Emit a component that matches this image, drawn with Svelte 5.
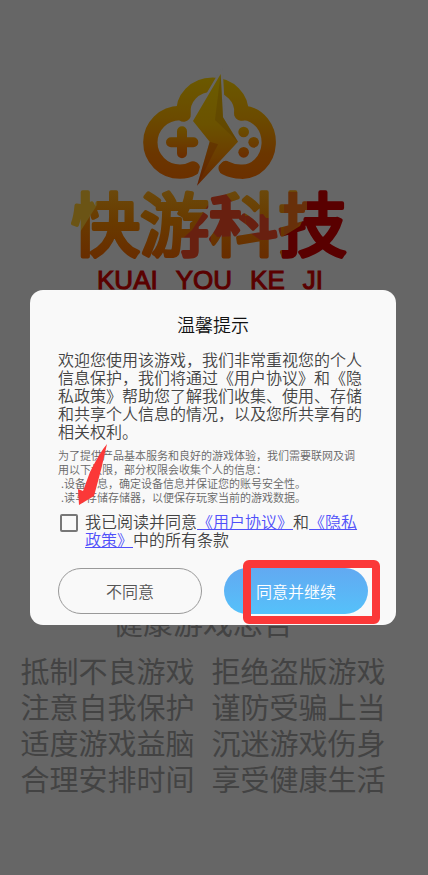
<script lang="ts">
	let agreed = $state(false);

	const advice = [
		['抵制不良游戏', '拒绝盗版游戏'],
		['注意自我保护', '谨防受骗上当'],
		['适度游戏益脑', '沉迷游戏伤身'],
		['合理安排时间', '享受健康生活']
	];

	const permissions = [
		'.设备信息，确定设备信息并保证您的账号安全性。',
		'.读写存储存储器，以便保存玩家当前的游戏数据。'
	];
</script>

<main class="splash">
	<svg class="logo" viewBox="0 0 480 390" aria-hidden="true">
		<defs>
			<linearGradient id="cloud" gradientUnits="userSpaceOnUse" x1="0" y1="30" x2="0" y2="345">
				<stop offset="0" stop-color="#6b5a00" />
				<stop offset="0.4" stop-color="#6b4b00" />
				<stop offset="0.75" stop-color="#6b3600" />
				<stop offset="1" stop-color="#6b3000" />
			</linearGradient>
			<linearGradient id="bolt" gradientUnits="userSpaceOnUse" x1="0" y1="30" x2="0" y2="360">
				<stop offset="0" stop-color="#6b5c00" />
				<stop offset="0.45" stop-color="#6b5200" />
				<stop offset="0.75" stop-color="#6b3c00" />
				<stop offset="1" stop-color="#652400" />
			</linearGradient>
			<linearGradient id="pad" gradientUnits="userSpaceOnUse" x1="0" y1="184" x2="0" y2="280">
				<stop offset="0" stop-color="#6b5000" />
				<stop offset="1" stop-color="#6b2c00" />
			</linearGradient>
		</defs>
		<g fill="none" stroke="url(#cloud)" stroke-width="43" stroke-linecap="round">
			<path d="M158 144H150A89 88 0 0 0 150 320Q172 320 189 310" />
			<path d="M334 144H342A79 88 0 0 1 332 320Q308 320 287 309" />
			<path d="M161 149C155 101 194 59 248 59C299 59 338 100 334 146" />
		</g>
		<path d="M272 27L189 168L239 230L201 362L324 230L279 157Z" fill="url(#bolt)" stroke="#666" stroke-width="14" />
		<path d="M272 27L189 168L239 230L201 362L324 230L279 157Z" fill="url(#bolt)" />
		<path d="M272 27L255 165L324 230L279 157Z" fill="#573800" opacity="0.35" />
		<path d="M239 230L264 238L201 362Z" fill="#571800" opacity="0.3" />
		<path d="M156 199V265M123 232H190" fill="none" stroke="url(#pad)" stroke-width="30" stroke-linecap="round" />
		<g fill="url(#pad)">
			<circle cx="341" cy="201" r="16" />
			<circle cx="371" cy="232" r="16" />
			<circle cx="341" cy="262" r="16" />
		</g>
	</svg>

	<svg class="wordmark" viewBox="0 0 300 100" role="img" aria-label="快游科技">
		<defs>
			<linearGradient id="orange" x1="0" y1="0" x2="0" y2="1">
				<stop offset="0.1" stop-color="#6b490b" />
				<stop offset="0.4" stop-color="#693b00" />
				<stop offset="0.8" stop-color="#682c00" />
			</linearGradient>
			<pattern id="facets" patternUnits="userSpaceOnUse" width="300" height="100">
				<rect width="300" height="100" fill="url(#orange)" />
				<path d="M0 0H38L37 25L20 52H0Z" fill="#6b5415" />
				<path d="M150 22L132 50L121 60V95H151V22Z" fill="#682010" />
				<path d="M151 14H166L174 24L185 30V52L180 56L157 57L151 50Z" fill="#682010" />
				<path d="M185 36L203 34L206 38H221V60H200L186 50Z" fill="#682010" />
				<path d="M224 12H247V30L238 46L224 56Z" fill="#68300a" />
				<path d="M247 0H300V100H222V57L240 46L247 30Z" fill="#590000" />
			</pattern>
		</defs>
		<text x="11" y="71">快游科技</text>
	</svg>

	<p class="pinyin"><span>KUAI</span><span>YOU</span><span>KE</span><span>JI</span></p>

	<section class="advice">
		<h2>健康游戏忠告</h2>
		{#each advice as [left, right]}
			<p><span>{left}</span><span>{right}</span></p>
		{/each}
	</section>
</main>

<div class="overlay">
	<div class="dialog" role="dialog" aria-modal="true" aria-labelledby="dialog-title">
		<h1 id="dialog-title">温馨提示</h1>

		<p class="intro">
			欢迎您使用该游戏，我们非常重视您的个人信息保护，我们将通过《用户协议》和《隐私政策》帮助您了解我们收集、使用、存储和共享个人信息的情况，以及您所共享有的相关权利。
		</p>

		<div class="details">
			<p>为了提供产品基本服务和良好的游戏体验，我们需要联网及调<br />用以下权限，部分权限会收集个人的信息：</p>
			<ul>
				{#each permissions as item}
					<li>{item}</li>
				{/each}
			</ul>
		</div>

		<div class="agree">
			<input id="agree" type="checkbox" bind:checked={agreed} />
			<label for="agree">我已阅读并同意<a href="#terms">《用户协议》</a>和<a href="#privacy">《隐私政策》</a>中的所有条款</label>
		</div>

		<div class="actions">
			<button type="button" class="decline">不同意</button>
			<button type="button" class="accept">同意并继续<span class="marker"></span></button>
		</div>

		<svg class="arrow" viewBox="0 0 40 70" aria-hidden="true">
			<path d="M33 4Q26 12 16 32L9 51L4 49L5 65L20 56L27 30Z" fill="#fb3838" />
		</svg>
	</div>
</div>

<style>
	:global(body) {
		background: #666;
	}

	.splash,
	.overlay {
		font-family: 'Noto Sans CJK SC', sans-serif;
	}

	h1,
	h2,
	p,
	ul {
		margin: 0;
		padding: 0;
		font-weight: inherit;
	}

	.splash {
		display: flex;
		flex-direction: column;
		align-items: center;
		box-sizing: border-box;
		min-height: 100vh;
		padding: 65px 8px 0 0;
		background: #666;
		color: #434343;
	}

	.logo {
		width: 160px;
		height: 130px;
	}

	.wordmark {
		width: 300px;
		height: 100px;
		margin-top: -15px;
		overflow: visible;
	}

	.wordmark text {
		font-size: 69px;
		font-weight: 400;
		fill: url(#facets);
		stroke: url(#facets);
		stroke-width: 4px;
		stroke-linecap: round;
		stroke-linejoin: round;
	}

	.pinyin {
		display: flex;
		gap: 18px;
		margin-top: -16px;
		color: #5a0000;
		font: 400 26px/32px 'Liberation Sans', sans-serif;
		-webkit-text-stroke: 1px #5a0000;
	}

	.advice {
		margin: 307px 14px 0 0;
	}

	.advice h2 {
		margin-bottom: 13px;
		font-size: 30px;
		line-height: 36px;
		text-align: center;
	}

	.advice p {
		display: flex;
		gap: 17px;
		font-size: 29px;
		line-height: 36px;
	}

	.overlay {
		position: absolute;
		inset: 0;
		padding: 290px 32px 0 30px;
	}

	.dialog {
		position: relative;
		padding: 23px 28px 11px;
		border-radius: 13px;
		background: #f9f9f9;
		color: #444;
		font-weight: 350;
	}

	h1 {
		color: #111;
		font-size: 18px;
		line-height: 22px;
		text-align: center;
	}

	.intro {
		margin-top: 15px;
		font-size: 16px;
		line-height: 18px;
	}

	.details {
		margin-top: 8px;
		color: #666;
		font-size: 11px;
		line-height: 14px;
		white-space: nowrap;
	}

	.details ul {
		padding-left: 3px;
		list-style: none;
	}

	.agree {
		display: flex;
		align-items: flex-start;
		gap: 7px;
		margin: 8px 0 0 2px;
		font-size: 16px;
		line-height: 18px;
	}

	.agree input {
		flex: none;
		appearance: none;
		width: 18px;
		height: 18px;
		margin: 2px 0 0;
		border: 2px solid #777;
		border-radius: 2px;
	}

	.agree input:checked {
		background: #58b8f8;
	}

	.agree label {
		margin-right: 8px;
	}

	.agree a {
		color: #5050fa;
		text-underline-offset: 1px;
	}

	.actions {
		display: grid;
		grid-template-columns: 1fr 1fr;
		gap: 22px;
		margin-top: 20px;
	}

	.actions button {
		position: relative;
		height: 46px;
		padding: 0;
		border: 0;
		border-radius: 23px;
		font: inherit;
		font-size: 16px;
	}

	.actions .decline {
		border: 1px solid #999;
		background: transparent;
		color: #555;
	}

	.actions .accept {
		background: linear-gradient(#62a9f1, #55c1fa);
		color: #fff;
	}

	.marker {
		position: absolute;
		inset: -8px -12px -10px 19px;
		border: 8px solid #fb3838;
		border-radius: 6px;
		pointer-events: none;
	}

	.arrow {
		position: absolute;
		top: 150px;
		left: 44px;
		width: 40px;
		height: 70px;
		pointer-events: none;
	}
</style>
